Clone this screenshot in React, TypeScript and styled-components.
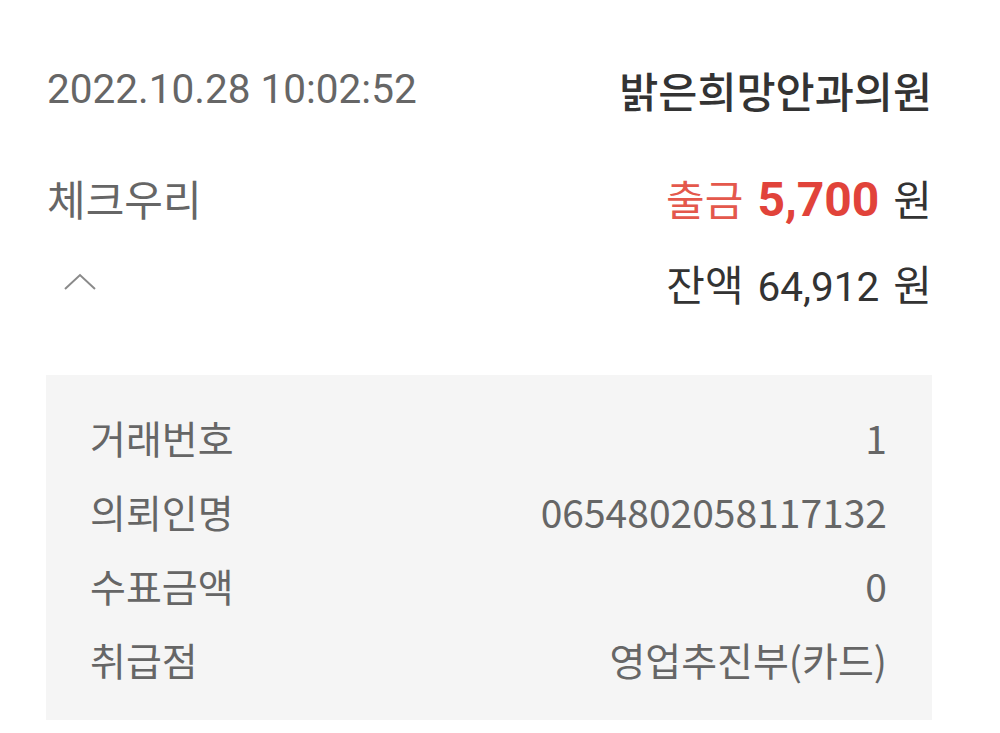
import styled, { createGlobalStyle } from 'styled-components';

const GlobalStyle = createGlobalStyle`
  body {
    margin: 0;
    background: #fff;
    font-family: Roboto, "Noto Sans CJK KR", sans-serif;
  }
`;

const Page = styled.div`
  width: 1000px;
  box-sizing: border-box;
  padding: 59px 68px 0 46px;
`;

const Row = styled.div<{ $gap?: number }>`
  display: flex;
  justify-content: space-between;
  align-items: center;
  height: 60px;
  margin-top: ${p => p.$gap ?? 0}px;
`;

const DateText = styled.span`
  font-size: 40.5px;
  color: #666;
  padding-left: 1px;
`;

const Merchant = styled.span`
  font-family: "Noto Sans CJK KR", sans-serif;
  font-size: 42.5px;
  font-weight: 500;
  color: #333;
`;

const Account = styled.span`
  font-family: "Noto Sans CJK KR", sans-serif;
  font-size: 42px;
  color: #666;
  padding-left: 1px;
`;

const Amount = styled.span`
  display: flex;
  align-items: baseline;
  gap: 14px;
  font-size: 40.5px;
  color: #333;
`;

const Kind = styled.span`
  font-family: "Noto Sans CJK KR", sans-serif;
  font-size: 42px;
  color: #e4584c;
`;

const Money = styled.span<{ $red?: boolean }>`
  font-size: ${p => (p.$red ? 48 : 40.5)}px;
  font-weight: ${p => (p.$red ? 700 : 400)};
  color: ${p => (p.$red ? '#e1433a' : '#333')};
`;

const Won = styled.span`
  font-family: "Noto Sans CJK KR", sans-serif;
  font-size: 42px;
`;

const Toggle = styled.button`
  border: 0;
  background: none;
  padding: 0 0 0 18px;
  display: flex;
  align-items: center;
`;

const Detail = styled.div`
  margin-top: 63px;
  background: #f5f5f5;
  padding: 25px 45px 24px 44px;
`;

const DetailRow = styled.div`
  display: flex;
  justify-content: space-between;
  align-items: center;
  height: 74px;
  font-family: "Noto Sans CJK KR", sans-serif;
  font-size: 39px;
  color: #666;
`;

const details: [string, string][] = [
  ['거래번호', '1'],
  ['의뢰인명', '0654802058117132'],
  ['수표금액', '0'],
  ['취급점', '영업추진부(카드)'],
];

export default function App() {
  return (
    <>
      <GlobalStyle />
      <Page>
        <Row>
          <DateText>2022.10.28 10:02:52</DateText>
          <Merchant>밝은희망안과의원</Merchant>
        </Row>
        <Row $gap={48}>
          <Account>체크우리</Account>
          <Amount>
            <Kind>출금</Kind>
            <Money $red>5,700</Money>
            <Won>원</Won>
          </Amount>
        </Row>
        <Row $gap={25}>
          <Toggle aria-label="접기">
            <svg width="32" height="18" viewBox="0 0 32 18">
              <polyline points="1,16 16,2 31,16" fill="none" stroke="#8a8a8a" strokeWidth="2" />
            </svg>
          </Toggle>
          <Amount>
            <Won>잔액</Won>
            <Money>64,912</Money>
            <Won>원</Won>
          </Amount>
        </Row>
        <Detail>
          {details.map(([label, value]) => (
            <DetailRow key={label}>
              <span>{label}</span>
              <span>{value}</span>
            </DetailRow>
          ))}
        </Detail>
      </Page>
    </>
  );
}
